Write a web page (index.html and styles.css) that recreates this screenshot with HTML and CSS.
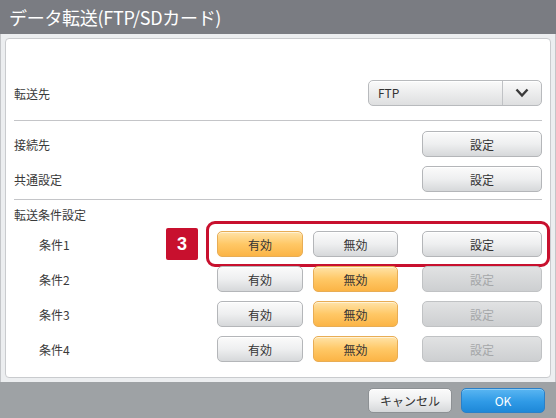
FILE: index.html
```html
<!DOCTYPE html>
<html lang="ja">
<head>
<meta charset="utf-8">
<link rel="stylesheet" href="styles.css">
</head>
<body>
<div class="win">
  <div class="titlebar">データ転送(FTP/SDカード)</div>
  <div class="body">
    <div class="panel">
      <div class="row">
        <span class="label">転送先</span>
        <div class="select">
          <span class="sel-text">FTP</span>
          <span class="sel-arrow">
            <svg width="14" height="10" viewBox="0 0 14 10"><path d="M1.5 1.5 L7 7.5 L12.5 1.5" fill="none" stroke="#3a3a3a" stroke-width="2.4"/></svg>
          </span>
        </div>
      </div>
      <div class="sep sep1"></div>
      <div class="row">
        <span class="label">接続先</span>
        <button class="btn wide">設定</button>
      </div>
      <div class="row gap9">
        <span class="label">共通設定</span>
        <button class="btn wide">設定</button>
      </div>
      <div class="sep sep2"></div>
      <div class="section">転送条件設定</div>
      <div class="cond first">
        <span class="label sub">条件1</span>
        <button class="btn half on">有効</button>
        <button class="btn half mid">無効</button>
        <button class="btn wide">設定</button>
        <div class="highlight"></div>
        <div class="badge">3</div>
      </div>
      <div class="cond">
        <span class="label sub">条件2</span>
        <button class="btn half">有効</button>
        <button class="btn half mid on">無効</button>
        <button class="btn wide off">設定</button>
      </div>
      <div class="cond">
        <span class="label sub">条件3</span>
        <button class="btn half">有効</button>
        <button class="btn half mid on">無効</button>
        <button class="btn wide off">設定</button>
      </div>
      <div class="cond">
        <span class="label sub">条件4</span>
        <button class="btn half">有効</button>
        <button class="btn half mid on">無効</button>
        <button class="btn wide off">設定</button>
      </div>
    </div>
  </div>
  <div class="footer">
    <button class="btn foot">キャンセル</button>
    <button class="btn foot ok">OK</button>
  </div>
</div>
</body>
</html>
```
FILE: styles.css
```css
* { box-sizing: border-box; }
html, body { margin: 0; padding: 0; }
body {
  width: 556px;
  height: 418px;
  overflow: hidden;
  font-family: "Noto Sans CJK JP", "Noto Sans", sans-serif;
  color: #3a3a3a;
  background: #9ea2a5;
}
.win {
  width: 556px;
  height: 418px;
  display: flex;
  flex-direction: column;
}
.titlebar {
  height: 34px;
  background: #7a7c82;
  color: #fff;
  font-size: 18px;
  line-height: 34px;
  padding-left: 9px;
  letter-spacing: -0.3px;
}
.body {
  background: #eceef0;
  padding: 4px 4px 4px 4px;
  border-left: 1px solid #c4c6c9;
  border-right: 1px solid #c4c6c9;
}
.panel {
  background: #fff;
  border: 1px solid #c9cbce;
  border-radius: 4px;
  height: 340px;
  padding: 41px 8px 0 8px;
}
.row {
  display: flex;
  align-items: center;
  height: 26px;
}
.gap9 { margin-top: 9px; }
.label {
  flex: 1;
  font-size: 12px;
  color: #3a3a3a;
}
.label.sub { padding-left: 25px; }
.select {
  width: 174px;
  height: 26px;
  display: flex;
  border: 1px solid #b8babd;
  border-radius: 5px;
  background: linear-gradient(#fafafa, #dedfe0);
  box-shadow: inset 0 1px 0 #fff;
}
.sel-text {
  flex: 1;
  font-size: 12px;
  line-height: 24px;
  padding-left: 9px;
  color: #333;
}
.sel-arrow {
  width: 39px;
  border-left: 1px solid #c0c2c5;
  display: flex;
  align-items: center;
  justify-content: center;
}
.sep {
  height: 1px;
  background: #c4c5c8;
}
.sep1 { margin: 14px 0 10px; }
.sep2 { margin: 7px 0 0; }
.section {
  font-size: 12px;
  height: 31px;
  line-height: 29px;
  color: #3a3a3a;
}
.btn {
  font-family: "Noto Sans CJK JP", "Noto Sans", sans-serif;
  font-size: 12px;
  color: #333;
  height: 26px;
  padding: 0;
  border: 1px solid #b4b6b9;
  border-radius: 5px;
  background: linear-gradient(#fbfbfb 0%, #eeeff0 50%, #d6d8da 100%);
  box-shadow: inset 0 1px 0 #fff;
}
.btn.wide { width: 120px; }
.btn.half { width: 86px; }
.btn.mid { margin-left: 10px; margin-right: 24px; width: 85px; }
.btn.on {
  background: linear-gradient(#ffe3a8 0%, #ffc866 50%, #fbb446 100%);
  border-color: #e8ad55;
  box-shadow: inset 0 1px 0 #fff2d6;
}
.btn.off {
  background: linear-gradient(#e1e2e3, #cdcfd1);
  border-color: #c0c2c4;
  color: #a5a7a9;
  box-shadow: none;
}
.cond {
  display: flex;
  align-items: center;
  height: 26px;
  margin-top: 9px;
  position: relative;
}
.cond.first { margin-top: 0; }
.highlight {
  position: absolute;
  left: 192px;
  top: -10px;
  width: 344px;
  height: 46px;
  border: 3px solid #c8102e;
  border-radius: 9px;
  pointer-events: none;
}
.badge {
  position: absolute;
  left: 152px;
  top: -3px;
  width: 32px;
  height: 32px;
  background: #c8102e;
  color: #fff;
  font-family: "Liberation Sans", Arial, sans-serif;
  font-weight: bold;
  font-size: 18px;
  line-height: 32px;
  text-align: center;
  border-radius: 2px;
}
.footer {
  flex: 1;
  display: flex;
  justify-content: flex-end;
  align-items: center;
  padding-right: 11px;
  gap: 9px;
  background: #9ea2a5;
}
.btn.foot {
  width: 84px;
  height: 25px;
  border-color: #8d9194;
}
.btn.ok {
  background: linear-gradient(#5ab6f2 0%, #2f9ae6 55%, #1e88d8 100%);
  border-color: #2a80c8;
  color: #fff;
  box-shadow: inset 0 1px 0 #8ccdf6;
}
```
